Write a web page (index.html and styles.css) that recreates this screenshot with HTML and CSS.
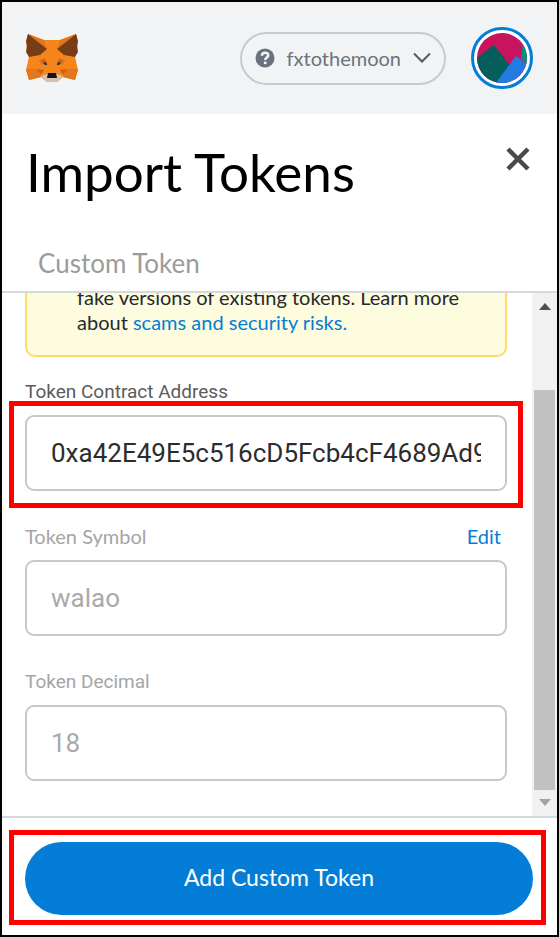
FILE: index.html
```html
<!DOCTYPE html>
<html lang="en">
<head>
<meta charset="utf-8">
<meta name="viewport" content="width=device-width, initial-scale=1">
<title>Import Tokens</title>
<link rel="stylesheet" href="styles.css">
</head>
<body>
<div class="popup">
  <header class="topbar">
    <svg class="fox" viewBox="0 0 52 48" aria-hidden="true">
      <path fill="#f6851b" d="M2 0 18 6H34L50 0 52 9 49 23 52 36 49 46 37 43 31 48H21L15 43 3 46 0 36 3 23 0 9Z"/>
      <path fill="#e2761b" d="M2 0 18 6 21 15ZM50 0 34 6 31 15ZM0 35H12L15 43 3 46ZM52 35H40L37 43 49 46Z"/>
      <path fill="#763d16" d="M2 0 21 15 14 21 3 23 0 18 1 11 0 7ZM50 0 31 15 38 21 49 23 52 18 51 11 52 7Z"/>
      <path fill="#e4761b" d="M13 26 19 24 22 32 14 29ZM39 26 33 24 30 32 38 29Z"/>
      <path fill="#cd6116" d="M14 27 19 25 21 31ZM38 27 33 25 31 31ZM11 35 18 36 15 41ZM41 35 34 36 37 41Z"/>
      <path fill="#233447" d="M17 29 20 28 21 31 19 31ZM35 29 32 28 31 31 33 31Z"/>
      <path fill="#d7c1b3" d="M15 42 21 40H31L37 42 31 48H21Z"/>
      <path fill="#161616" d="M22 39H30L31 44H21Z"/>
    </svg>
    <button class="network" type="button">
      <svg class="network-help" viewBox="0 0 20 20" aria-hidden="true">
        <circle cx="10" cy="10" r="9.5" fill="#6a737d"/>
        <path d="M6.9 7.7C7 5.600 8.300 4.700 10.100 4.700S13.200 5.700 13.200 7.400C13.200 9.600 10.200 9.500 10.200 12" fill="none" stroke="#f2f3f4" stroke-width="2.600"/>
        <circle cx="10.200" cy="14.800" r="1.500" fill="#f2f3f4"/>
      </svg>
      <span>fxtothemoon</span>
      <svg class="network-arrow" viewBox="0 0 18 12" aria-hidden="true"><path d="M1 1.500 9 9.500 17 1.500" fill="none" stroke="#535a61" stroke-width="2"/></svg>
    </button>
    <button class="account" type="button" aria-label="Account">
      <svg viewBox="0 0 50 50" aria-hidden="true">
        <defs><clipPath id="disc"><circle cx="25" cy="25" r="25"/></clipPath></defs>
        <g clip-path="url(#disc)">
          <path fill="#c8145f" d="M0 0H50V50H0Z"/>
          <path fill="#03907f" d="M46 9 50 8V32L44 26Z"/>
          <path fill="#045f5c" d="M-4 28 17 12 38 39 24 56-4 52Z"/>
          <path fill="#247ae3" d="M18 51 39 23 56 37 46 56H16Z"/>
        </g>
      </svg>
    </button>
  </header>

  <section class="heading">
    <div class="title-row">
      <h1>Import Tokens</h1>
      <button class="close" type="button" aria-label="Close">
        <svg viewBox="0 0 26 24" aria-hidden="true"><path d="M3 2 23 22M23 2 3 22" fill="none" stroke="#4a4a4a" stroke-width="4.500"/></svg>
      </button>
    </div>
    <button class="tab" type="button">Custom Token</button>
  </section>

  <main class="scroller">
    <form class="content" id="token-form">
      <p class="warning">fake versions of existing tokens. Learn more about <a href="#risks">scams and security risks.</a></p>
      <div class="field">
        <div class="label-row"><label class="strong" for="address">Token Contract Address</label></div>
        <div class="marked marked-field"><input id="address" type="text" value="0xa42E49E5c516cD5Fcb4cF4689Ad9"></div>
      </div>
      <div class="field">
        <div class="label-row"><label class="round" for="symbol">Token Symbol</label><button class="edit" type="button">Edit</button></div>
        <input id="symbol" type="text" value="walao" disabled>
      </div>
      <div class="field">
        <div class="label-row"><label for="decimal">Token Decimal</label></div>
        <input id="decimal" type="text" value="18" disabled>
      </div>
    </form>
    <div class="scrollbar" aria-hidden="true">
      <svg class="arrow" viewBox="0 0 12 7"><path fill="#505050" d="M6 0 12 7H0Z"/></svg>
      <div class="track"><div class="thumb"></div></div>
      <svg class="arrow" viewBox="0 0 12 7"><path fill="#a3a3a3" d="M0 0H12L6 7Z"/></svg>
    </div>
  </main>

  <footer class="footer">
    <div class="marked marked-button"><button class="submit" type="submit" form="token-form">Add Custom Token</button></div>
  </footer>
</div>
</body>
</html>
```
FILE: styles.css
```css
* { box-sizing: border-box; }

body {
  margin: 0;
  font-family: Lato, "Open Sans", sans-serif;
  color: #24292e;
  background: #fff;
}

button {
  padding: 0;
  border: 0;
  background: none;
  font: inherit;
  color: inherit;
}

svg { display: block; }

.popup {
  display: flex;
  flex-direction: column;
  height: 100vh;
  min-height: 800px;
  border: 2px solid #000;
}

.topbar {
  display: flex;
  align-items: center;
  height: 112px;
  padding: 0 24px;
  background: #f2f3f4;
}

.fox {
  width: 52px;
  height: 48px;
  margin-right: auto;
}

.network {
  display: flex;
  align-items: center;
  gap: 12px;
  height: 53px;
  padding: 0 13px;
  border: 2px solid #c6cacf;
  border-radius: 27px;
  font-size: 20px;
  color: #6a737d;
}

.network-help { width: 20px; height: 20px; }
.network-arrow { width: 18px; height: 12px; }

.account {
  width: 62px;
  height: 62px;
  margin-left: 25px;
  padding: 3px;
  border: 3px solid #037dd6;
  border-radius: 50%;
  background: #fff;
}

.heading {
  height: 179px;
  padding: 22px 24px;
  border-bottom: 2px solid #d6d9dc;
}

.title-row {
  display: flex;
  justify-content: space-between;
  align-items: flex-start;
}

h1 {
  margin: 0;
  font-size: 53px;
  line-height: 72px;
  font-weight: 400;
  color: #000;
}

.close { padding: 11px 2px; }
.close svg { width: 26px; height: 24px; }

.tab {
  margin-top: 40px;
  padding: 0 12px;
  font-size: 26px;
  line-height: 30px;
  color: #9b9b9b;
}

.scroller {
  display: flex;
  flex: 1;
  min-height: 0;
}

.content {
  display: flex;
  flex: 1;
  flex-direction: column;
  justify-content: flex-end;
  min-width: 0;
  padding: 0 25px 35px 23px;
  overflow: hidden;
}

.warning {
  margin: 0;
  padding: 20px 36px 20px 50px;
  border: 2px solid #ffd970;
  border-radius: 10px;
  background: #fefcde;
  font-size: 20px;
  line-height: 25px;
}

a, .edit { color: #037dd6; text-decoration: none; }

.field { margin-top: 22px; }
.field + .field { margin-top: 33px; }

.label-row {
  display: flex;
  justify-content: space-between;
  height: 36px;
  padding-right: 6px;
  font-size: 20px;
  line-height: 24px;
}

.edit { height: 24px; }

label {
  font-family: Roboto, sans-serif;
  font-size: 19px;
  line-height: 26px;
  color: #a5a5a5;
}

label.strong { color: #5b5b5b; }
label.round { font-family: inherit; font-size: 20px; line-height: 24px; }

input {
  display: block;
  width: 100%;
  height: 76px;
  padding: 0 24px;
  border: 2px solid #c5c9cd;
  border-radius: 9px;
  background: #fff;
  font-family: Roboto, sans-serif;
  font-size: 26px;
  color: #2c2c2c;
}

input:disabled { color: #aaa; }

.scrollbar {
  display: flex;
  flex-direction: column;
  align-items: center;
  width: 25px;
  padding: 10px 0;
  background: #f1f1f1;
}

.arrow { width: 12px; height: 7px; }

.track {
  display: flex;
  flex: 1;
  align-items: flex-end;
  width: 21px;
  padding: 9px 0;
}

.thumb {
  width: 100%;
  height: 85%;
  background: #c1c1c1;
}

.footer {
  padding: 24px 24px 20px 23px;
  border-top: 2px solid #d6d9dc;
}

.marked { position: relative; }

.marked::after {
  content: "";
  position: absolute;
  border: 5px solid #f00;
  pointer-events: none;
}

.marked-field::after { inset: -14px -16px -17px; }
.marked-button::after { inset: -12px -13px -10px -16px; }

.submit {
  display: block;
  width: 100%;
  height: 73px;
  padding-bottom: 4px;
  border-radius: 37px;
  background: #037dd6;
  font-size: 23px;
  color: #fff;
}
```
